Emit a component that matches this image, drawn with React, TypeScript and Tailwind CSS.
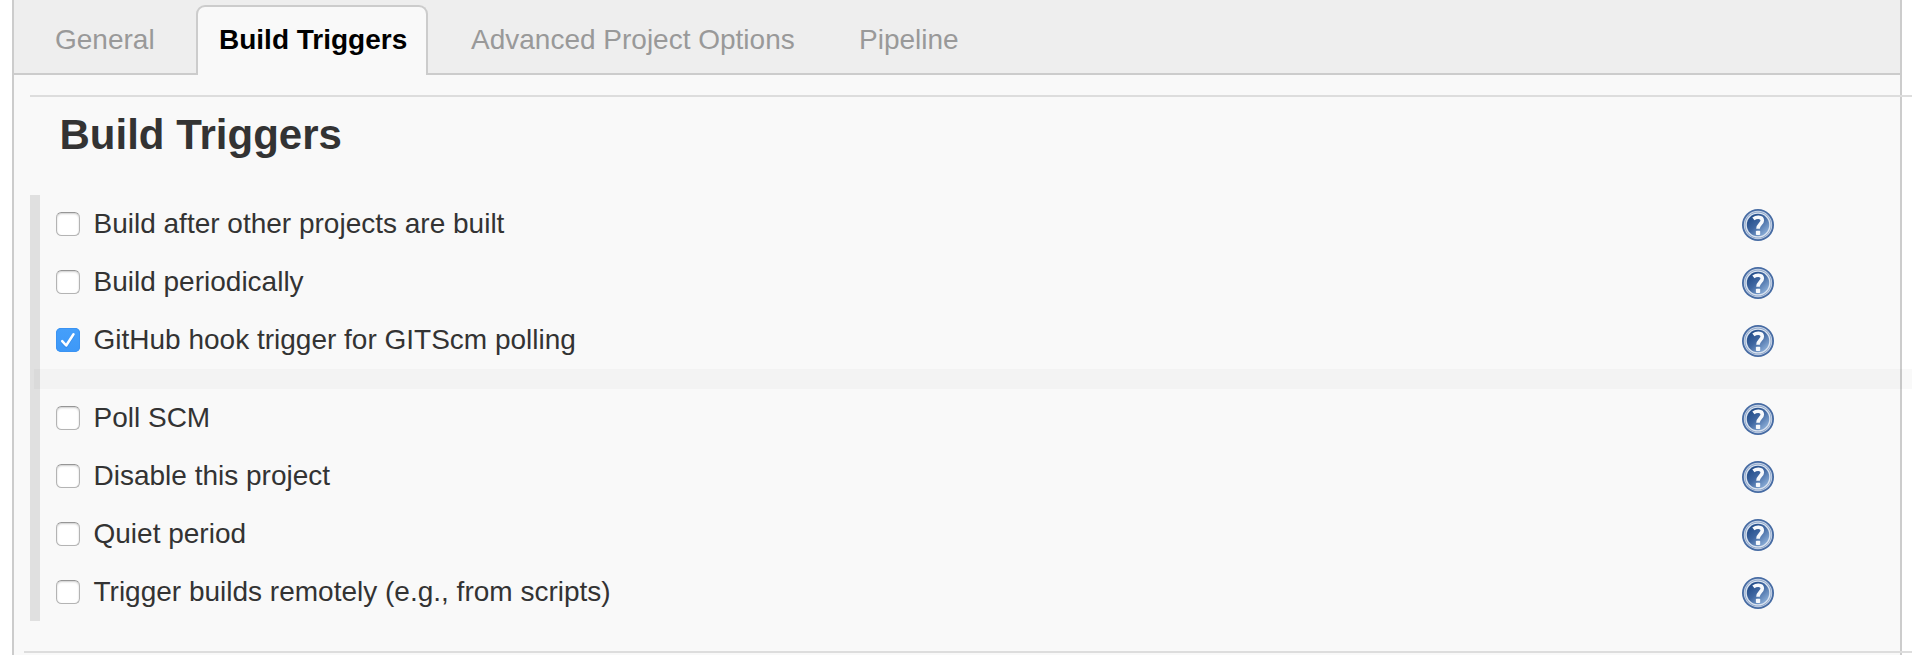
import React, { useId, useState } from "react";

const tabs = [
  { label: "General", box: "w-[182px] pl-[41px]" },
  { label: "Build Triggers", box: "w-[232px] pl-[21px]" },
  { label: "Advanced Project Options", box: "w-[431px] pl-[43px]" },
  { label: "Pipeline", box: "grow" },
];

const upperTriggers = [
  "Build after other projects are built",
  "Build periodically",
  "GitHub hook trigger for GITScm polling",
];

const lowerTriggers = [
  "Poll SCM",
  "Disable this project",
  "Quiet period",
  "Trigger builds remotely (e.g., from scripts)",
];

function HelpIcon() {
  const id = useId();
  return (
    <svg viewBox="0 0 32 32" className="size-8 shrink-0" role="img" aria-label="Help">
      <defs>
        <linearGradient id={id} x1="0.1" y1="0.1" x2="0.9" y2="0.95">
          <stop offset="0" stopColor="#204a87" />
          <stop offset="0.45" stopColor="#4067a1" />
          <stop offset="1" stopColor="#94b6de" />
        </linearGradient>
      </defs>
      <circle cx="16" cy="16" r="16" fill="#466ba3" />
      <circle cx="16" cy="16" r="14.2" fill="#c9d5e7" />
      <circle cx="16" cy="16" r="13.3" fill="#86a0c6" />
      <circle cx="16" cy="16" r="12.6" fill="#dbe4f0" />
      <circle cx="16" cy="16" r="11.2" fill={`url(#${id})`} />
      <path
        d="M11.4 9.9C13 8.7 14.8 8.2 16.6 8.3c2.5.1 3.7 1.4 3.7 3.2 0 3-4.2 3.6-4.3 8.2"
        fill="none"
        stroke="#f7f9fc"
        strokeWidth="3.6"
      />
      <rect x="13.9" y="21.8" width="4.3" height="4.2" rx="0.8" fill="#f7f9fc" />
    </svg>
  );
}

function Checkbox({ checked }: { checked: boolean }) {
  if (checked) {
    return (
      <span className="flex size-6 shrink-0 items-center justify-center rounded-[5px] bg-gradient-to-b from-[#459ffa] to-[#3d98f8] shadow-[inset_0_0_0_1px_#3b93f2]">
        <svg viewBox="0 0 24 24" className="size-6" fill="none">
          <path d="M6.3 14.6 10.2 19 17.8 7.4" stroke="#2f7fd6" strokeWidth="2.4" strokeLinecap="round" strokeLinejoin="round" opacity="0.45" />
          <path d="M6.2 13.2 10.2 17.5 17.5 6.3" stroke="#fff" strokeWidth="2.5" strokeLinecap="round" strokeLinejoin="round" />
        </svg>
      </span>
    );
  }
  return (
    <span className="size-6 shrink-0 rounded-[5.5px] border border-[#b4b4b4] border-t-[#969696] bg-white shadow-[inset_0_1px_2px_rgba(0,0,0,0.2)]" />
  );
}

function TriggerRow({ label, checked, onToggle }: { label: string; checked: boolean; onToggle: () => void }) {
  return (
    <div className="flex h-[58px] items-center pr-[126px] pl-4">
      <button type="button" role="checkbox" aria-checked={checked} onClick={onToggle} className="flex items-center text-left">
        <Checkbox checked={checked} />
        <span className="pl-[13.5px] leading-8 whitespace-nowrap">{label}</span>
      </button>
      <span className="ml-auto pt-0.5">
        <HelpIcon />
      </span>
    </div>
  );
}

export default function App() {
  const [active, setActive] = useState("Build Triggers");
  const [selected, setSelected] = useState<string[]>([upperTriggers[2]]);
  const toggle = (label: string) =>
    setSelected((s) => (s.includes(label) ? s.filter((l) => l !== label) : [...s, label]));
  const row = (label: string) => (
    <TriggerRow key={label} label={label} checked={selected.includes(label)} onToggle={() => toggle(label)} />
  );

  return (
    <div className="h-[655px] w-full overflow-hidden bg-white pr-[10px] pl-3 font-['Liberation_Sans',Arial,sans-serif] text-[28px] text-[#333]">
      <main className="flex h-full flex-col border-x-2 border-[#ccc] bg-[#f9f9f9]">
        <nav className="flex h-[75px] shrink-0 items-stretch bg-[#eee]">
          {tabs.map(({ label, box }) => (
            <button
              key={label}
              type="button"
              onClick={() => setActive(label)}
              className={`${box} shrink-0 border-[#ccc] text-left whitespace-nowrap ${
                active === label
                  ? "mt-[5px] rounded-t-[9px] border-x-2 border-t-2 bg-[#f9f9f9] pb-0.5 font-bold text-black"
                  : "border-b-2 pt-[7px] text-[#999]"
              }`}
            >
              {label}
            </button>
          ))}
        </nav>
        <hr className="mt-5 -mr-3 ml-4 border-t-2 border-[#ddd]" />
        <h1 className="flex h-[98px] shrink-0 items-start pt-[14px] pl-[45.5px] text-[42px] leading-[48px] font-bold">Build Triggers</h1>
        <section className="ml-4 shrink-0 border-l-[10px] border-[#e0e0e0]">
          {upperTriggers.map(row)}
          <div className="relative -mr-3 -ml-1.5 h-5 bg-black/[0.025]" />
          {lowerTriggers.map(row)}
        </section>
        <hr className="mt-[30px] -mr-3 ml-2.5 border-t-2 border-[#ddd]" />
      </main>
    </div>
  );
}
